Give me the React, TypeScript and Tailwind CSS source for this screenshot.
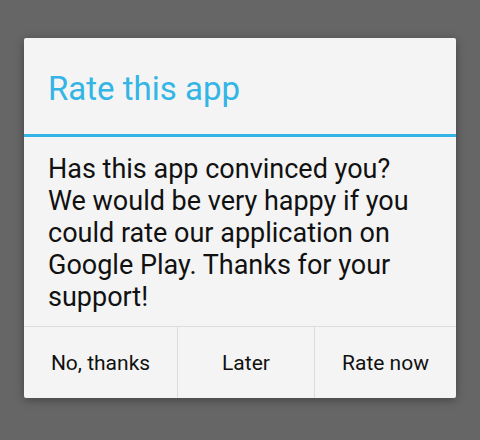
export default function App() {
  const buttons = [
    { label: 'No, thanks', width: 'w-[153px]' },
    { label: 'Later', width: 'w-[137px]' },
    { label: 'Rate now', width: 'flex-1' },
  ];

  return (
    <div
      className="w-[480px] h-[440px] bg-[#666666] pt-[38px] px-[24px]"
      style={{ fontFamily: 'Roboto, "Noto Sans", sans-serif' }}
    >
      <div className="w-[432px] h-[360px] bg-[#f4f4f4] rounded-[2px] shadow-[0_2px_10px_rgba(0,0,0,0.35)] flex flex-col overflow-hidden">
        {/* Title */}
        <div className="h-[96px] flex items-center px-[24px] pt-[4px]">
          <h1 className="text-[33px] leading-none text-[#33b5e5]">Rate this app</h1>
        </div>
        <div className="h-[3px] bg-[#33b5e5]" />

        {/* Message */}
        <div className="flex-1 px-[24px] pt-[16px]">
          <p className="text-[27px] leading-[32px] text-[#111111]">
            Has this app convinced you? We would be very happy if you could rate our application on Google Play. Thanks for your support!
          </p>
        </div>

        {/* Buttons */}
        <div className="h-[72px] flex border-t border-[#dcdcdc]">
          {buttons.map((b, i) => (
            <button
              key={b.label}
              className={`${b.width} h-full flex items-center justify-center pt-[3px] text-[21px] text-[#111111] ${
                i > 0 ? 'border-l border-[#dcdcdc]' : ''
              }`}
            >
              {b.label}
            </button>
          ))}
        </div>
      </div>
    </div>
  );
}
